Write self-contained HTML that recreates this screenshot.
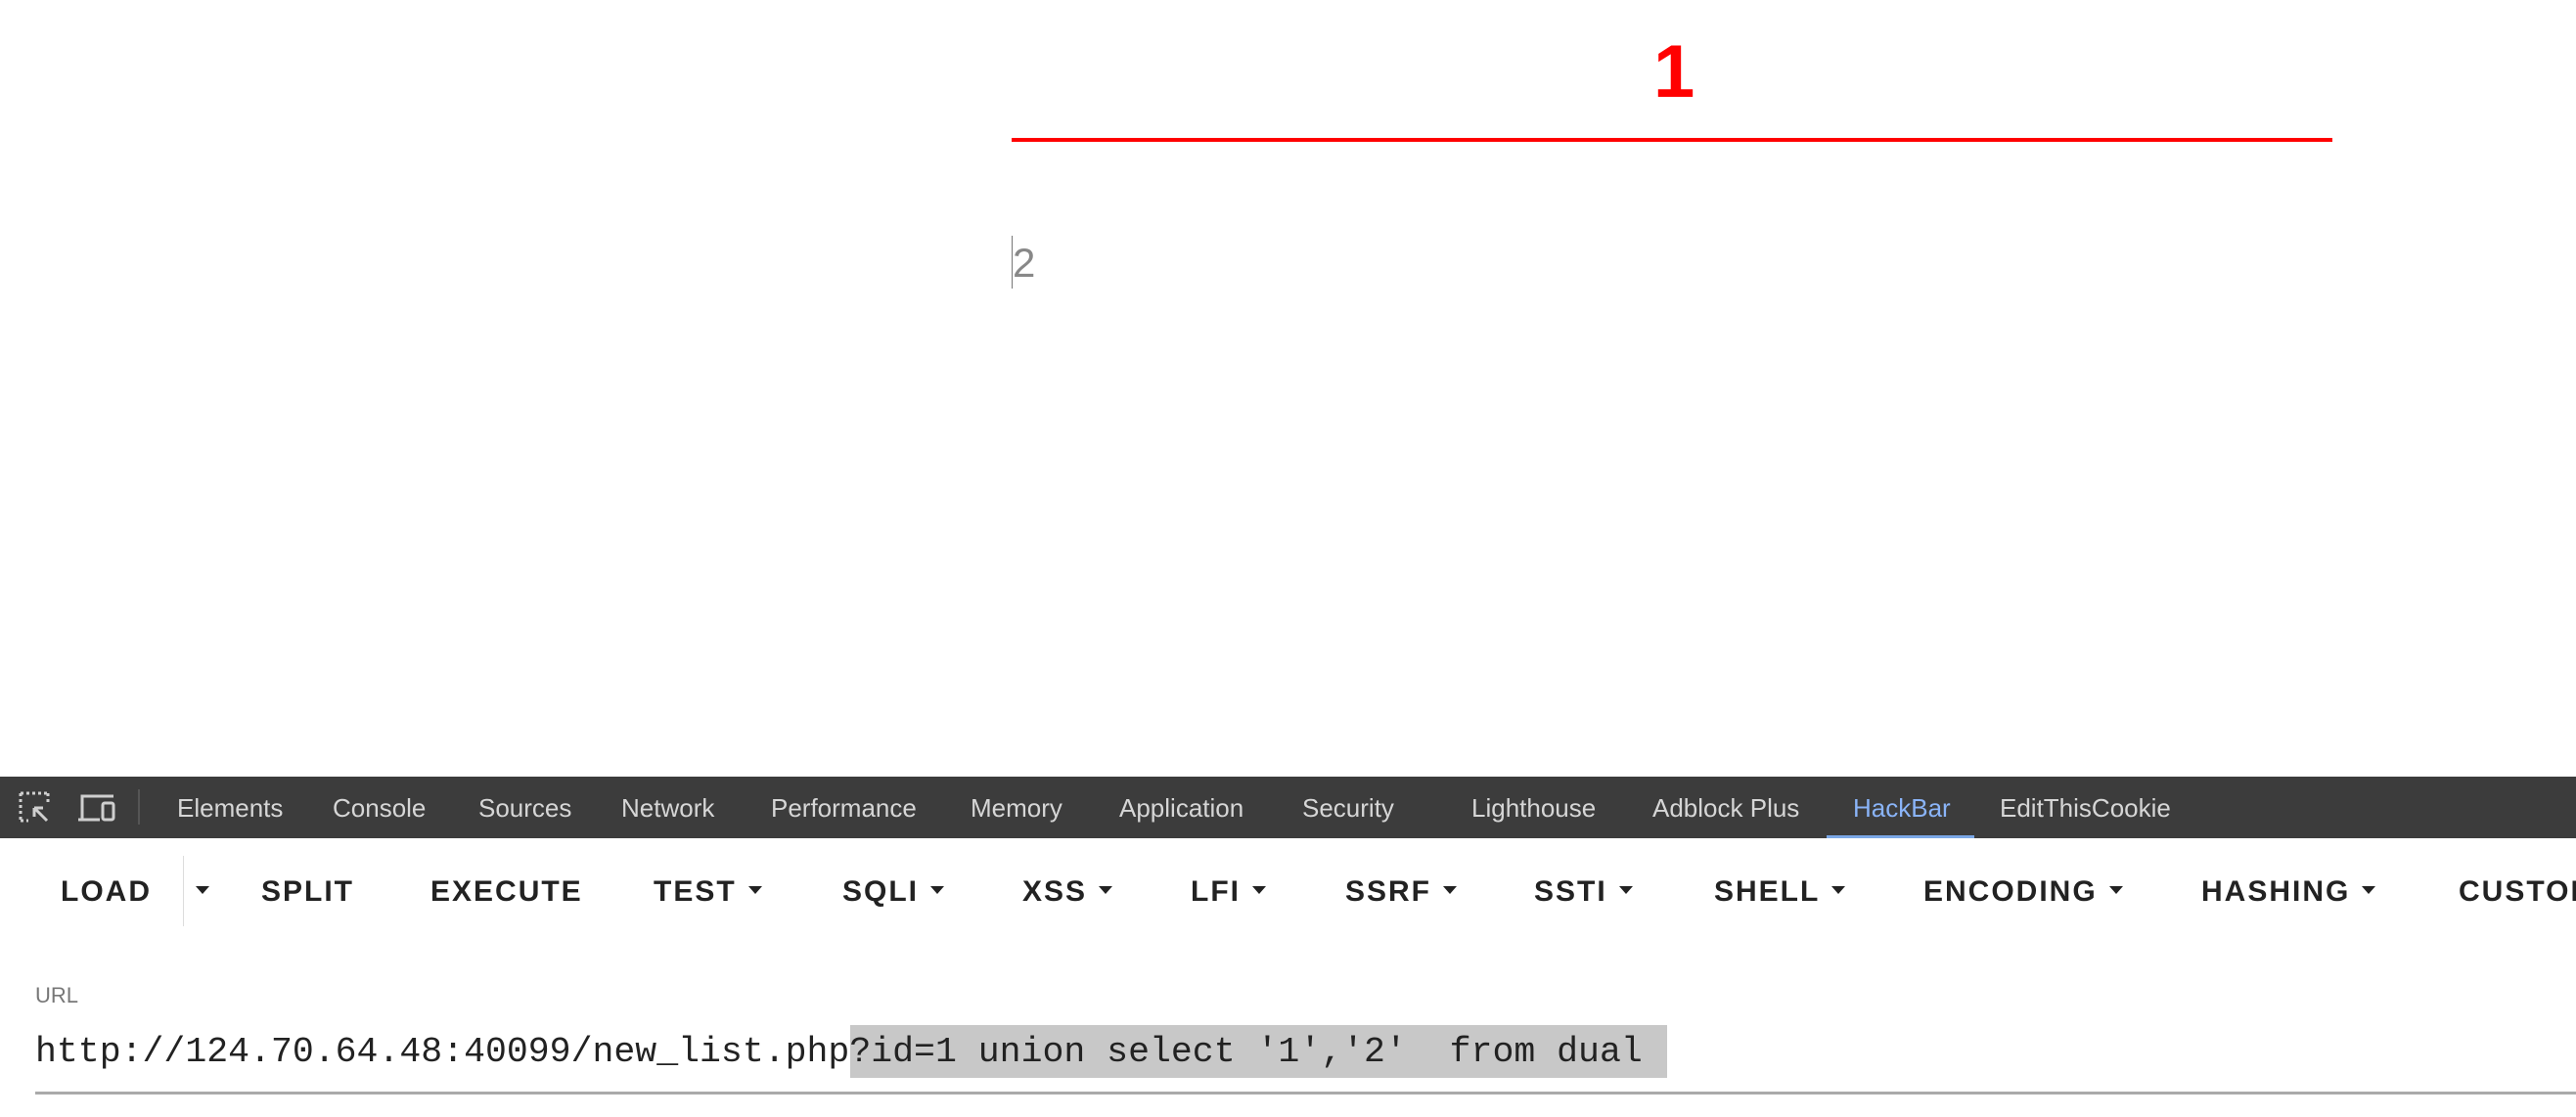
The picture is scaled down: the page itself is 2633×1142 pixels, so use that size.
<!DOCTYPE html>
<html><head><meta charset="utf-8"><style>
*{margin:0;padding:0;box-sizing:border-box}
html,body{width:2633px;height:1142px;background:#fff;overflow:hidden;position:relative;font-family:"Liberation Sans",sans-serif}
.a{position:absolute;white-space:pre}
.tab{position:absolute;top:811px;font-size:26px;color:#d6d6d6;line-height:30px}
.btn{position:absolute;top:894px;font-size:30px;font-weight:bold;color:#222;letter-spacing:2px;line-height:36px}
.car{display:inline-block;width:0;height:0;border-left:7px solid transparent;border-right:7px solid transparent;border-top:8px solid #222;vertical-align:middle;margin-left:12px;position:relative;top:-3px}
</style></head><body>
<div class="a" style="left:1690px;top:34px;font-size:76px;font-weight:bold;color:#f00;line-height:80px">1</div>
<div class="a" style="left:1034px;top:141px;width:1350px;height:4px;background:#f00"></div>
<div class="a" style="left:1034px;top:241px;width:1px;height:54px;background:#777"></div>
<div class="a" style="left:1035px;top:246px;font-size:42px;color:#888;line-height:46px">2</div>

<div class="a" style="left:0;top:794px;width:2633px;height:63px;background:#3c3c3c"></div>
<svg class="a" style="left:18px;top:808px" width="104" height="36" viewBox="0 0 104 36">
<g fill="none" stroke="#cfcfcf" stroke-width="3">
<path d="M3 3h28M3 3v28M3 31h8M31 3v10" stroke-dasharray="3 3"/>
<path d="M17 18l13 13M17 18h9M17 18v9"/>
<path d="M98 6h-32v24M62 30h22"/>
<rect x="87" y="13" width="11" height="17" rx="2"/>
</g></svg>
<div class="a" style="left:141px;top:807px;width:2px;height:36px;background:#555"></div>
<div class="tab" style="left:181px">Elements</div>
<div class="tab" style="left:340px">Console</div>
<div class="tab" style="left:489px">Sources</div>
<div class="tab" style="left:635px">Network</div>
<div class="tab" style="left:788px">Performance</div>
<div class="tab" style="left:992px">Memory</div>
<div class="tab" style="left:1144px">Application</div>
<div class="tab" style="left:1331px">Security</div>
<div class="tab" style="left:1504px">Lighthouse</div>
<div class="tab" style="left:1689px">Adblock Plus</div>
<div class="tab" style="left:1894px;color:#8ab4f8">HackBar</div>
<div class="tab" style="left:2044px">EditThisCookie</div>
<div class="a" style="left:1867px;top:854px;width:151px;height:3px;background:#7aa7e6"></div>

<div class="btn" style="left:62px">LOAD</div>
<div class="a" style="left:187px;top:875px;width:1px;height:72px;background:#ddd"></div>
<div class="btn" style="left:188px"><span class="car"></span></div>
<div class="btn" style="left:267px">SPLIT</div>
<div class="btn" style="left:440px">EXECUTE</div>
<div class="btn" style="left:668px">TEST<span class="car"></span></div>
<div class="btn" style="left:861px">SQLI<span class="car"></span></div>
<div class="btn" style="left:1045px">XSS<span class="car"></span></div>
<div class="btn" style="left:1217px">LFI<span class="car"></span></div>
<div class="btn" style="left:1375px">SSRF<span class="car"></span></div>
<div class="btn" style="left:1568px">SSTI<span class="car"></span></div>
<div class="btn" style="left:1752px">SHELL<span class="car"></span></div>
<div class="btn" style="left:1966px">ENCODING<span class="car"></span></div>
<div class="btn" style="left:2250px">HASHING<span class="car"></span></div>
<div class="btn" style="left:2513px">CUSTOM</div>

<div class="a" style="left:36px;top:1004px;font-size:22px;color:#777;line-height:28px">URL</div>
<div class="a" style="left:869px;top:1048px;width:835px;height:54px;background:#c8c8c8"></div>
<div class="a" style="left:36px;top:1054px;font-family:'Liberation Mono',monospace;font-size:36.5px;color:#222;line-height:44px">http://124.70.64.48:40099/new_list.php?id=1 union select '1','2'  from dual </div>
<div class="a" style="left:36px;top:1116px;width:2597px;height:3px;background:#aaa"></div>
</body></html>
